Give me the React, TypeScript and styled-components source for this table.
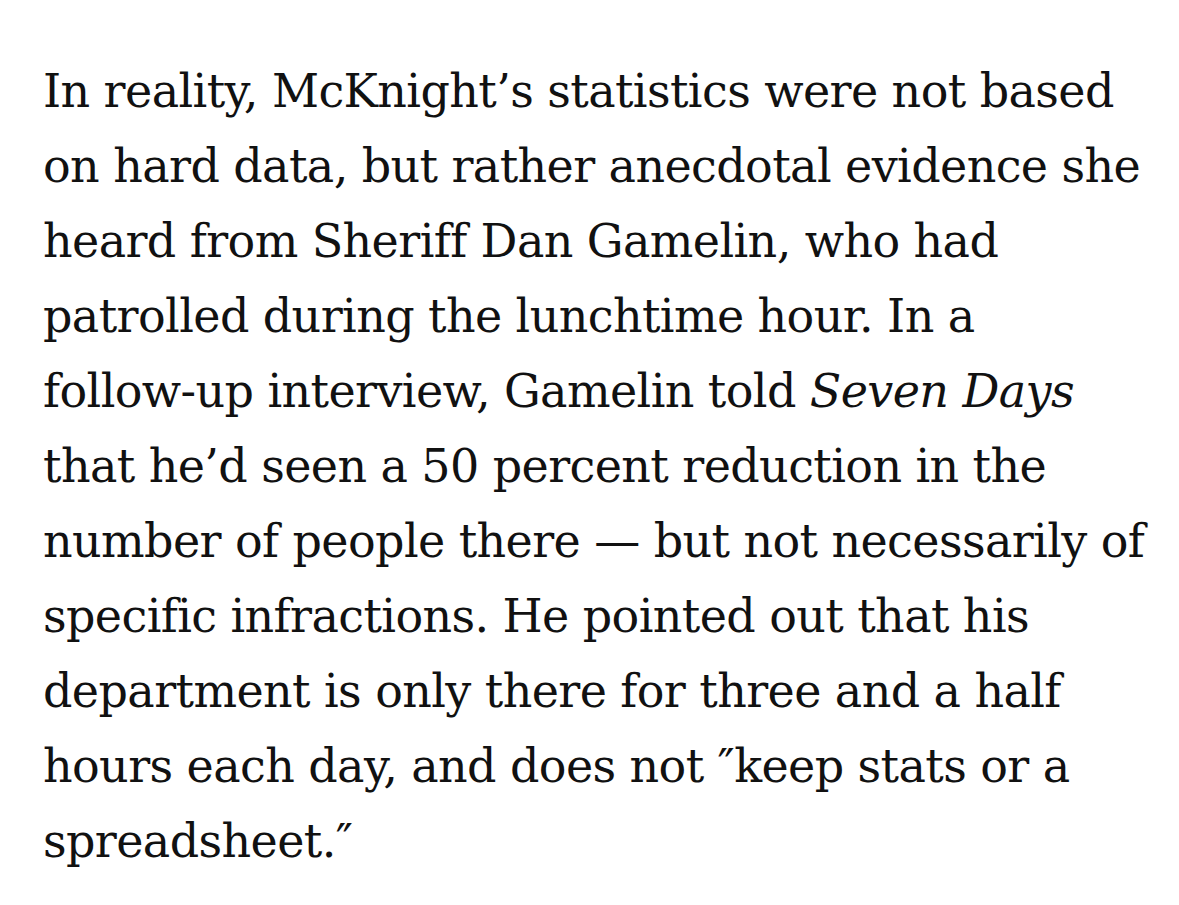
import styled, { createGlobalStyle } from "styled-components";

const GlobalStyle = createGlobalStyle`
  html, body {
    margin: 0;
    padding: 0;
    background: #ffffff;
  }
`;

const Article = styled.article`
  padding: 54px 0 0 43px;
  width: 1179px;
  box-sizing: border-box;
`;

const Paragraph = styled.p`
  margin: 0;
  font-family: "DejaVu Serif", "Liberation Serif", serif;
  font-size: 46px;
  letter-spacing: -0.6px;
  line-height: 75px;
  color: #111111;
  white-space: nowrap;
`;

const Line = styled.span`
  display: block;
`;

const lines: React.ReactNode[] = [
  "In reality, McKnight\u2019s statistics were not based",
  "on hard data, but rather anecdotal evidence she",
  "heard from Sheriff Dan Gamelin, who had",
  "patrolled during the lunchtime hour. In a",
  <>
    follow-up interview, Gamelin told <em>Seven Days</em>
  </>,
  "that he\u2019d seen a 50 percent reduction in the",
  "number of people there \u2014 but not necessarily of",
  "specific infractions. He pointed out that his",
  "department is only there for three and a half",
  "hours each day, and does not \u2033keep stats or a",
  "spreadsheet.\u2033",
];

const App = () => {
  return (
    <>
      <GlobalStyle />
      <Article>
        <Paragraph>
          {lines.map((line, index) => (
            <Line key={index}>{line}</Line>
          ))}
        </Paragraph>
      </Article>
    </>
  );
};
export default App;
